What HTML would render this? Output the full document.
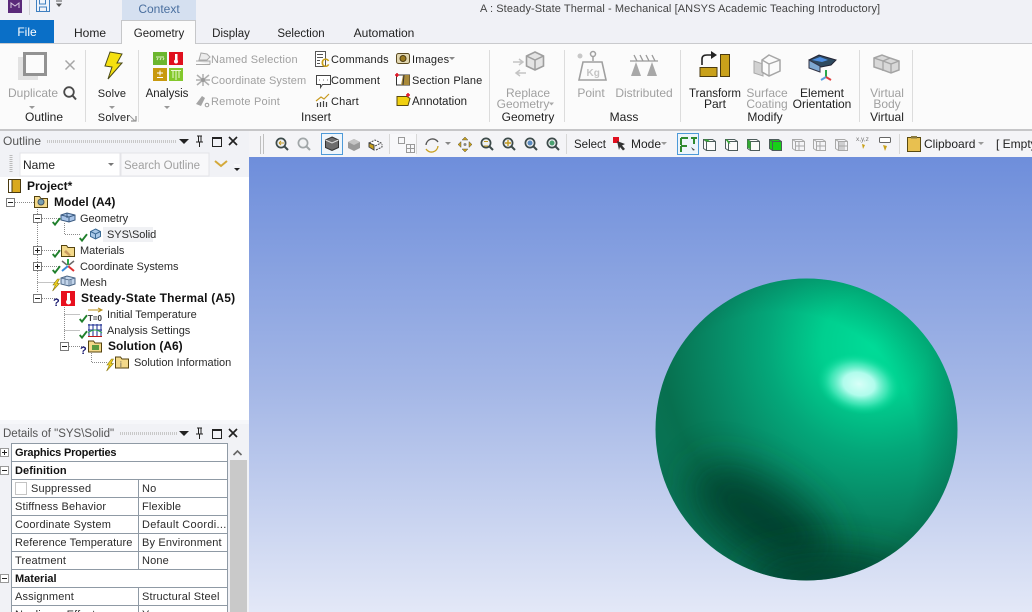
<!DOCTYPE html>
<html><head><meta charset="utf-8"><title>Mechanical</title>
<style>
html,body{margin:0;padding:0;overflow:hidden;width:1032px;height:612px}
#w{width:1032px;height:612px;overflow:hidden;position:relative;background:#f2f3f7;font-family:"Liberation Sans",sans-serif;font-size:12px;color:#222}
svg.a{position:absolute;left:0;top:0}
.t{position:absolute;line-height:14px;height:14px;white-space:nowrap;transform:translateY(-7px)}
.c{transform:translate(-50%,-7px);text-align:center}
.g{color:#a0a0a0}
.b{font-weight:bold;color:#111}
.s,.d,.db,.r,.n{transform:translateY(-6px)}
.c.r,.c.n{transform:translate(-50%,-6px)}
.s{font-size:11px;letter-spacing:-.03px;color:#2b2b2b}
.d{font-size:11px;letter-spacing:.15px;color:#2b2b2b}
.db{font-size:11px;font-weight:bold;color:#111}
.r{font-size:11.5px}
.n{font-size:11px;letter-spacing:.2px}
</style></head><body><div id="w">
<svg class="a" width="1032" height="612" viewBox="0 0 1032 612" xmlns="http://www.w3.org/2000/svg">
<defs>
<linearGradient id="bg" x1="0" y1="0" x2="0" y2="1"><stop offset="0" stop-color="#6e8edb"/><stop offset=".5" stop-color="#a3b6e6"/><stop offset="1" stop-color="#e3e8f7"/></linearGradient>
<radialGradient id="sph" gradientUnits="userSpaceOnUse" cx="875" cy="345" r="265">
<stop offset="0" stop-color="#00dc98"/><stop offset=".2" stop-color="#00cf8f"/><stop offset=".4" stop-color="#04a87a"/><stop offset=".6" stop-color="#078a66"/><stop offset=".8" stop-color="#07704f"/><stop offset="1" stop-color="#0a7558"/>
</radialGradient>
<radialGradient id="rim" gradientUnits="userSpaceOnUse" cx="780" cy="450" r="182"><stop offset=".76" stop-color="#04503a" stop-opacity="0"/><stop offset="1" stop-color="#04503a" stop-opacity=".3"/></radialGradient>
<radialGradient id="hl" cx=".5" cy=".5" r=".5"><stop offset="0" stop-color="#d8fff8"/><stop offset=".38" stop-color="#b0fcec"/><stop offset=".68" stop-color="#50ecc0" stop-opacity=".75"/><stop offset="1" stop-color="#00dc98" stop-opacity="0"/></radialGradient>
<filter id="bl" filterUnits="userSpaceOnUse" x="600" y="380" width="400" height="260"><feGaussianBlur stdDeviation="20"/></filter>
<clipPath id="cs"><circle cx="806.500" cy="429.500" r="151"/></clipPath>
<symbol id="ck" viewBox="0 0 9 9" overflow="visible"><path d="M.7 5 3 7.600 8 1.200" fill="none" stroke="#1f7f2b" stroke-width="1.900"/></symbol>
<symbol id="bt" viewBox="0 0 8 12" overflow="visible"><path d="M5.500 0 1 6h2.400L.6 12 7.400 4.600H5L7.400 0z" fill="#f0d020" stroke="#8a7a10" stroke-width=".6"/></symbol>
<symbol id="fo" viewBox="0 0 14 13" overflow="visible"><path d="M.5 12.500V1.500h5l1.500 2h6.500v9z" fill="#f3d98a" stroke="#55430f"/></symbol>
<symbol id="mg" viewBox="0 0 14 14" overflow="visible"><circle cx="6" cy="6" r="4.600" fill="#eef0f2" stroke="#3d4a4a" stroke-width="1.700"/><path d="M9.500 9.500 13 13" stroke="#3d4a4a" stroke-width="2"/></symbol>
</defs>

<rect width="1032" height="44" fill="#f0f1f6"/>
<rect y="43" width="1032" height="1" fill="#c9cacd"/>
<rect y="44" width="1032" height="85" fill="#fbfbfb"/>
<rect x="122" width="74" height="20" fill="#d5e0f0"/>
<rect x="0" y="20" width="54" height="23" fill="#0a6fc7"/>
<path d="M121.500 44V20.500h74V44" fill="#fbfbfb" stroke="#c6c7c9"/><rect x="122" y="42" width="73" height="3" fill="#fbfbfb"/>
<rect x="8" y="0" width="14" height="13" fill="#5a2a7a"/><path d="M11 8V3l4 3 4-3v5" fill="none" stroke="#d8c8e0" stroke-width="1"/>
<rect x="29" y="0" width="1" height="15" fill="#d0d1d5"/>
<path d="M36.500 0v11.500h13V0M39.500 11V7h7v4M39.500 0v4h6V0" fill="#eef3fb" stroke="#3f7fc0"/>
<path d="M56 1h6" stroke="#555" stroke-width="1"/><path d="M56 3.500h6L59 7z" fill="#555"/>

<g fill="#dcdcdc"><rect x="85" y="50" width="1" height="72"/><rect x="138" y="50" width="1" height="72"/><rect x="489" y="50" width="1" height="72"/><rect x="564" y="50" width="1" height="72"/><rect x="680" y="50" width="1" height="72"/><rect x="859" y="50" width="1" height="72"/><rect x="912" y="50" width="1" height="72"/></g>

<rect x="18" y="57" width="20" height="23" fill="#e2e2e2"/><rect x="24.500" y="53.500" width="21" height="21" fill="#fbfbfb" stroke="#929292" stroke-width="3"/>
<path d="M65.500 60.500l9 9m0-9l-9 9" stroke="#a6a6a6" stroke-width="1.500"/>
<circle cx="69" cy="92" r="4.800" fill="none" stroke="#4a4a4a" stroke-width="1.800"/><path d="M72.500 95.500 76 99.500" stroke="#4a4a4a" stroke-width="2"/>
<g fill="#999"><path d="M29 106h6l-3 3z"/><path d="M109 106h6l-3 3z"/><path d="M164 106h6l-3 3z"/></g>
<path d="M110 52l12 2-5 9h5l-14 16 4-12-7-1z" fill="#f5e010" stroke="#4a4a18" stroke-width="1"/>
<path d="M131 121h5v-5" fill="none" stroke="#777"/><path d="M130 116l5 5" stroke="#999"/>
<rect x="153" y="52" width="14" height="13" fill="#6cb62e"/><path d="M156 57h8M157 60l1-2M160 60l1-2M163 60l1-2" stroke="#dff0c8" fill="none"/>
<rect x="169" y="52" width="14" height="13" fill="#e0101e"/><rect x="175" y="54" width="2.500" height="7" fill="#fff"/><circle cx="176" cy="61.500" r="2" fill="#fff"/>
<rect x="153" y="68" width="14" height="13" fill="#c8990e"/><path d="M157 73h6M160 70.500v5M157 77.500h6" stroke="#fff" fill="none"/>
<rect x="169" y="68" width="14" height="13" fill="#83c82c"/><path d="M171 70.500h10M173 71v7M176 71v9M179 71v7" stroke="#e9f7d0" fill="none"/>
<path d="M196 64.500h14M196 61h14v3.500M199 60l2-7 6 1 3 3-3 3z" fill="#ececec" stroke="#a8a8a8"/>
<path d="M197 75l12 10m0-10L197 85M203 74v12M196 80h14" stroke="#b0b0b0" stroke-width="1.500"/><circle cx="203" cy="80" r="2" fill="#999"/>
<path d="M196 104l6-8 3 2-4 8z" fill="#a5a5a5"/><circle cx="207" cy="105" r="1.800" fill="none" stroke="#999"/>
<path d="M315.500 51.500h10v15h-10z" fill="#fff" stroke="#555"/><path d="M317 54.500h6M317 57.500h6M317 60.500h3M317 63.500h3" stroke="#555"/><text x="321" y="67" font-family="Liberation Sans" font-size="12" font-weight="bold" fill="#c9a018">C</text>
<path d="M316.500 75.500h14v9h-8l-2 3v-3h-4z" fill="#fff" stroke="#444"/><path d="M319 80h1M323 80h1M327 80h1" stroke="#777"/>
<path d="M316 101l5-4 3 2 5-5" fill="none" stroke="#c89a20" stroke-width="1.200"/><path d="M317.500 107v-4M320.500 107v-5M323.500 107v-6M326.500 107v-5" stroke="#444" stroke-width="1.200"/>
<rect x="396.500" y="53.500" width="13" height="10" rx="2" fill="#e2d7b0" stroke="#5a4a22"/><circle cx="403" cy="58.500" r="3" fill="#9a7a20" stroke="#4a3a12"/>
<rect x="396.500" y="75" width="13" height="10" fill="#fff" stroke="#333"/><path d="M403 75h6.500v10H401z" fill="#a98a3a"/><path d="M404 75 403 85" stroke="#333"/><path d="M395 75h4M397 73v4" stroke="#e01020" stroke-width="1.500"/>
<path d="M397 96.500h10l3 2-2 7h-11z" fill="#f0d010" stroke="#5a4a10"/><path d="M406 95h4M408 93v4" stroke="#e01020" stroke-width="1.500"/>
<g fill="#888"><path d="M449 57h6l-3 3z"/></g>
<path d="M535 52l8.500 4v10l-8.500 4-8.500-4V56z" fill="#e4e4e4" stroke="#9e9e9e" stroke-width="1.600"/><path d="M526.500 56l8.500 4 8.500-4M535 60v10" fill="none" stroke="#9e9e9e" stroke-width="1.500"/>
<path d="M513 62h9M519 59l4 3-4 3" fill="none" stroke="#c4c4c4" stroke-width="1.500"/><path d="M526 73h-9M520 70l-4 3 4 3" fill="none" stroke="#c4c4c4" stroke-width="1.500"/>
<path d="M549 102.500h5l-2.500 3z" fill="#aaa"/>
<circle cx="580" cy="56" r="2.500" fill="#c8c8c8"/><circle cx="593" cy="54" r="2.500" fill="none" stroke="#a0a0a0" stroke-width="1.500"/><path d="M593 57v4" stroke="#a0a0a0" stroke-width="1.500"/>
<path d="M583 62h19l4 18h-27z" fill="#fbfbfb" stroke="#a0a0a0" stroke-width="1.600"/><text x="586.500" y="76" font-family="Liberation Sans" font-size="10" font-weight="bold" fill="#c4c4c4">Kg</text>
<path d="M630 61h28M634 55l3 6M640 55l3 6M646 55l3 6M652 55l3 6" stroke="#999" stroke-width="1.300" fill="none"/>
<path d="M636 62l5 14h-10z" fill="#a8a8a8"/><path d="M652 62l5 14h-10z" fill="#a8a8a8"/>
<rect x="700" y="67.500" width="17" height="9" fill="#c9a11a" stroke="#4a3a10"/><rect x="720.500" y="54.500" width="9" height="22" fill="#c9a11a" stroke="#4a3a10"/>
<path d="M702 65v-6q0-4 5-4h7" fill="none" stroke="#222" stroke-width="1.600"/><path d="M711 51l6 4-6 4z" fill="#222"/>
<path d="M754 61l9 3v12l-9-3z" fill="#d2d2d2" stroke="#a8a8a8"/><path d="M769 55l11 5v11l-11 5-7-4V60z" fill="#fbfbfb" stroke="#a6a6a6" stroke-width="1.500"/><path d="M762 60l7 4 11-4M769 64v12" fill="none" stroke="#a6a6a6" stroke-width="1.300"/>
<path d="M809 60l10-5 17 5-5 5-10 2-12-3z" fill="#2e4a60" stroke="#223"/><path d="M812 60l8-3 8 3-6 2z" fill="#4d8de0"/><path d="M809 60l11 6v6l-11-4z" fill="#7fa8d0" stroke="#334"/>
<path d="M826 70v7" stroke="#2aa84a" stroke-width="2"/><path d="M826 77l-5 3" stroke="#5aa0e0" stroke-width="2"/><path d="M826 77l5 3" stroke="#e04040" stroke-width="2"/>
<path d="M874 58l8-3 8 3 9 3v9l-8 3-8-3-9-3z" fill="#d8d8d8" stroke="#a4a4a4" stroke-width="1.500"/><path d="M874 58l9 3v10M883 61l7-3M883 61l8 3 8-3M891 64v9" fill="none" stroke="#a4a4a4" stroke-width="1.300"/>

<rect y="129" width="1032" height="28" fill="#f4f4f7"/><rect y="129" width="1032" height="2" fill="#c6c6c8"/>
<rect x="249" y="157" width="783" height="455" fill="url(#bg)"/>
<g fill="#bfbfbf"><rect x="260" y="136" width="1" height="18"/><rect x="263" y="134" width="1" height="20"/></g>
<use href="#mg" x="275" y="137" width="14" height="14"/><path d="M279 143h5M279 143l2-2M279 143l2 2" stroke="#c49a20" fill="none"/>
<g opacity=".45"><use href="#mg" x="297" y="137" width="14" height="14"/></g>
<rect x="321.500" y="133.500" width="21" height="21" fill="#eef5fb" stroke="#4d9ad8"/>
<path d="M332 137l6.500 3v7.500l-6.500 3-6.500-3V140z" fill="#6d6d6d" stroke="#333"/><path d="M325.500 140l6.500 3 6.500-3" fill="none" stroke="#ddd"/>
<path d="M354 139l6 3v6l-6 3-6-3v-6z" fill="#999"/><path d="M348 142l6 3 6-3-6-3z" fill="#c4c4c4"/>
<path d="M369 143l6-3 6 3-6 3z" fill="#fff" stroke="#444" stroke-dasharray="2 1"/><path d="M369 147l5 3v-5l-5-2z" fill="#c9a11a" stroke="#444"/><path d="M376 150l6-3v-3" fill="none" stroke="#444" stroke-dasharray="2 1"/>
<rect x="389" y="134" width="1" height="20" fill="#d8d8d8"/><rect x="390" y="134" width="26" height="22" fill="#f8f8fa"/><rect x="416" y="134" width="1" height="20" fill="#d8d8d8"/>
<rect x="398.500" y="137.500" width="6" height="6" fill="none" stroke="#9a9a9a"/><path d="M406.500 144.500h8v8h-8zM410.500 144.500v8M406.500 148.500h8" fill="none" stroke="#9a9a9a"/>
<path d="M426 145a6.500 6.500 0 0 1 12-3" fill="none" stroke="#555" stroke-width="1.300"/><path d="M438 146a6.500 6.500 0 0 1-12 3" fill="none" stroke="#c8a020" stroke-width="1.300"/>
<path d="M445 142h6l-3 3z" fill="#888"/>
<path d="M465 137l3 3h-6zM465 152l3-3h-6zM458 144.500l3-3v6zM472 144.500l-3-3v6z" fill="#c9a11a" stroke="#555" stroke-width=".5"/><circle cx="465" cy="144.500" r="1.500" fill="#888"/>
<use href="#mg" x="480" y="137" width="14" height="14"/><path d="M484 141.500h4M484 146h4" stroke="#c49a20"/>
<use href="#mg" x="502" y="137" width="14" height="14"/><path d="M505 143h6M508 140v6" stroke="#c49a20" stroke-width="1.400"/>
<use href="#mg" x="524" y="137" width="14" height="14"/><circle cx="530" cy="143" r="2.500" fill="#5a8ac0"/>
<use href="#mg" x="546" y="137" width="14" height="14"/><circle cx="552" cy="143" r="2.500" fill="#4aa070"/>
<rect x="566" y="134" width="1" height="20" fill="#d8d8d8"/>
<path d="M613 137h6v6h-6z" fill="#e01020"/><path d="M617 141l8 3-3 1.500 3 3.500-2 1.500-3-3.500-1 3z" fill="#333"/>
<path d="M661 142h6l-3 3z" fill="#999"/>
<rect x="677.500" y="133.500" width="21" height="21" fill="#eef5fb" stroke="#4d9ad8"/>
<path d="M681 138h7M681 138v7M691 138h6M694 138v6M681 146h6M681 146v6" stroke="#2f8a30" stroke-width="2" fill="none"/><path d="M691 147l4 3-2 .5z" fill="#444"/>
<g fill="none" stroke="#4d5b5b">
<path d="M703.500 139.500h9l3 2v9h-9l-3-2z" fill="#fbfbfb"/><path d="M703.500 139.500l3 2h9M706.500 141.500v9"/>
<path d="M725.500 139.500h9l3 2v9h-9l-3-2z" fill="#fbfbfb"/><path d="M725.500 139.500l3 2h9M728.500 141.500v9"/>
<path d="M747.500 139.500h9l3 2v9h-9l-3-2z" fill="#fbfbfb"/><path d="M747.500 139.500l3 2h9M750.500 141.500v9"/>
<path d="M769.500 139.500h9l3 2v9h-9l-3-2z" fill="#18d018"/><path d="M769.500 139.500l3 2h9M772.500 141.500v9"/>
</g>
<path d="M703.500 139.500h4l3 2h-4zM725.500 139.500l2 0 3 4-2 0z" fill="#3a3"/><path d="M747.500 139.500v8l3 2v-8z" fill="#3a3"/>
<g fill="none" stroke="#a8a8a8">
<path d="M792.500 139.500h9l3 2v9h-9l-3-2zM792.500 139.500l3 2h9M795.500 141.500v9M799 141v10M795 146h10"/>
<path d="M813.500 139.500h9l3 2v9h-9l-3-2zM813.500 139.500l3 2h9M816.500 141.500v9M820 141v10M816 146h10"/>
<path d="M835.500 139.500h9l3 2v9h-9l-3-2zM835.500 139.500l3 2h9M838.500 141.500v9M842 141v10M838 146h10M840 141v10M844 141v10"/>
</g>
<text x="856" y="141" font-family="Liberation Sans" font-size="6.500" fill="#777">x,y,z</text><path d="M862 144l3 1-2 4z" fill="#c9a11a"/>
<rect x="879.500" y="137.500" width="11" height="5" rx="1" fill="#fff" stroke="#666"/><path d="M883 145l4 1-2 5z" fill="#c9a11a"/>
<rect x="899" y="134" width="1" height="20" fill="#d8d8d8"/>
<rect x="907.500" y="137.500" width="13" height="14" fill="#e8c050" stroke="#5a4a10"/><rect x="911" y="136" width="6" height="2.500" fill="#8a7a40"/>
<path d="M978 142h6l-3 3z" fill="#999"/>

<g clip-path="url(#cs)">
<circle cx="806.500" cy="429.500" r="152" fill="url(#sph)"/>
<ellipse cx="762" cy="518" rx="80" ry="36" fill="#023a2a" opacity=".85" filter="url(#bl)" transform="rotate(33 762 518)"/>
<ellipse cx="830" cy="580" rx="85" ry="24" fill="#023a2a" opacity=".85" filter="url(#bl)"/>
<circle cx="806.500" cy="429.500" r="152" fill="url(#rim)"/>
</g>
<ellipse cx="859" cy="384" rx="42" ry="30" fill="url(#hl)" transform="rotate(12 859 384)"/>

<rect x="0" y="129" width="249" height="483" fill="#f1f2f6"/>
<rect x="0" y="129" width="1032" height="2" fill="#c6c6c8"/>
<path d="M47 141.500h130" stroke="#c8c8c8" stroke-width="3" stroke-dasharray="1 1"/>
<path d="M179 139h10l-5 5z" fill="#222"/>
<path d="M197 136h5M198.500 136v6M201 136v6M196 142h7M199.500 142v5" stroke="#222" fill="none"/>
<rect x="212.500" y="137.500" width="9" height="9" fill="none" stroke="#222"/><rect x="212" y="137" width="10" height="2" fill="#222"/>
<path d="M229 137l8 8m0-8l-8 8" stroke="#222" stroke-width="1.700"/>
<path d="M11 155v18" stroke="#bbb" stroke-width="3" stroke-dasharray="1 1"/>
<rect x="20" y="153" width="100" height="23" fill="#fff" stroke="#e4e4e8"/><rect x="121" y="153" width="88" height="23" fill="#f8f8fa" stroke="#e4e4e8"/>
<path d="M108 163h6l-3 3z" fill="#777"/>
<path d="M215 161l6 5 6-5" fill="none" stroke="#d4a93a" stroke-width="2"/>
<path d="M234 168h6l-3 3z" fill="#222"/><path d="M234 165h6" stroke="#fff"/>
<rect x="0" y="177" width="249" height="243" fill="#fff"/>
<rect x="103" y="227" width="50" height="15" fill="#f0f1f4"/>

<g stroke="#8a8a8a" stroke-dasharray="1 1" fill="none">
<path d="M15 202.500h19M37.500 207v86M42 218.500h17M64.500 223v11.500h16M42 250.500h17M42 266.500h17M37.500 282.500h20M42 298.500h15M64.500 303v38M64.500 314.500h16M64.500 330.500h16M69 346.500h15M91.500 351v11.500h16"/>
</g>
<g fill="#fff" stroke="#7a7a7a">
<rect x="6.500" y="198.500" width="8" height="8"/><rect x="33.500" y="214.500" width="8" height="8"/><rect x="33.500" y="246.500" width="8" height="8"/><rect x="33.500" y="262.500" width="8" height="8"/><rect x="33.500" y="294.500" width="8" height="8"/><rect x="60.500" y="342.500" width="8" height="8"/>
</g>
<path d="M8 202.500h5M35 218.500h5M35 250.500h5M37.500 248v5M35 266.500h5M37.500 264v5M35 298.500h5M62 346.500h5" stroke="#222"/>
<rect x="8.500" y="179.500" width="12" height="13" fill="#d9a91f" stroke="#4a3a10"/><rect x="8.500" y="179.500" width="3.500" height="13" fill="#fff" stroke="#4a3a10"/>
<use href="#fo" x="34" y="195" width="14" height="13"/><circle cx="41" cy="202" r="3" fill="#7aa0b0" stroke="#456"/>
<path d="M61 215l6-2 8 2v5l-6 2-8-2z" fill="#a8c4e8" stroke="#3a5a80"/><path d="M61 215l8 2 6-2M67 213v5M69 217v5" fill="none" stroke="#3a5a80"/>
<use href="#ck" x="52" y="217" width="9" height="9"/>
<path d="M95.500 229l5 2.500v5l-5 2.500-5-2.500v-5z" fill="#a8c8e8" stroke="#3a6a95"/><path d="M90.500 231.500l5 2.500 5-2.500M95.500 234v5" fill="none" stroke="#3a6a95"/>
<use href="#ck" x="79" y="233" width="9" height="9"/>
<use href="#fo" x="61" y="244" width="14" height="13"/><path d="M66 250l5 5-2 1-5-4z" fill="#c89a60"/>
<use href="#ck" x="52" y="249" width="9" height="9"/>
<path d="M68 259v6" stroke="#2aa84a" stroke-width="2"/><path d="M68 266l6 5" stroke="#e03030" stroke-width="2"/><path d="M68 266l-6 5" stroke="#3a8ad8" stroke-width="2"/><path d="M62 261l5 4M74 261l-5 4" stroke="#6a6a6a" stroke-width="1.500"/>
<use href="#ck" x="52" y="265" width="9" height="9"/>
<path d="M61 278l6-2 8 2v6l-6 2-8-2z" fill="#c2d4ea" stroke="#4a6585"/><path d="M61 278l8 2 6-2M69 280v6M65 277v7M71 279v6" fill="none" stroke="#4a6585" stroke-width=".7"/>
<use href="#bt" x="52" y="279" width="8" height="12"/>
<rect x="61" y="291" width="14" height="15" fill="#e8101e"/><rect x="67" y="293" width="3" height="8" fill="#fff"/><circle cx="68.500" cy="302" r="2.500" fill="#fff"/>
<text x="53" y="306" font-family="Liberation Sans" font-size="11" font-weight="bold" fill="#1a1a70">?</text>
<path d="M88 310h13M98 308l4 2-4 2" fill="none" stroke="#b8901a"/><text x="88" y="321" font-family="Liberation Sans" font-size="8" font-weight="bold" fill="#333">T=0</text>
<use href="#ck" x="79" y="314" width="9" height="9"/>
<path d="M89 324v13M93 324v13M97 324v13M101 324v13M88 325h14M88 330h14" stroke="#1a2a90" fill="none"/><path d="M88 333q7-6 14 0" stroke="#2aa84a" fill="none"/><path d="M88 336.500h14" stroke="#c01818"/>
<use href="#ck" x="79" y="330" width="9" height="9"/>
<use href="#fo" x="88" y="339" width="14" height="14"/><rect x="92" y="345" width="7" height="5" fill="#5a9a40"/>
<text x="80" y="354" font-family="Liberation Sans" font-size="11" font-weight="bold" fill="#1a1a70">?</text>
<use href="#fo" x="115" y="355" width="14" height="14"/><text x="120" y="367" font-family="Liberation Sans" font-size="8" fill="#555">i</text>
<use href="#bt" x="106" y="359" width="8" height="12"/>

<rect x="0" y="420" width="249" height="192" fill="#f1f2f6"/><rect x="0" y="420" width="249" height="4" fill="#f6f7fa"/>
<path d="M120 433.500h58" stroke="#c8c8c8" stroke-width="3" stroke-dasharray="1 1"/>
<path d="M179 431h10l-5 5z" fill="#222"/>
<path d="M197 428h5M198.500 428v6M201 428v6M196 434h7M199.500 434v5" stroke="#222" fill="none"/>
<rect x="212.500" y="429.500" width="9" height="9" fill="none" stroke="#222"/><rect x="212" y="429" width="10" height="2" fill="#222"/>
<path d="M229 429l8 8m0-8l-8 8" stroke="#222" stroke-width="1.700"/>
<rect x="11" y="443" width="217" height="169" fill="#fff"/>
<g fill="none" stroke="#8f9aa5">
<path d="M11.500 443.500h216.500M11.500 461.500h216.500M11.500 479.500h216.500M11.500 497.500h216.500M11.500 515.500h216.500M11.500 533.500h216.500M11.500 551.500h216.500M11.500 569.500h216.500M11.500 587.500h216.500M11.500 605.500h216.500"/>
<path d="M11.500 443v169M227.500 443v169M138.500 479v90M138.500 587v25"/>
</g>
<g fill="#fff" stroke="#999"><rect x="0.500" y="448.500" width="8" height="8"/><rect x="0.500" y="466.500" width="8" height="8"/><rect x="0.500" y="574.500" width="8" height="8"/></g>
<path d="M2 452.500h5M4.500 450v5M2 470.500h5M2 578.500h5" stroke="#222"/>
<rect x="15.500" y="482.500" width="11" height="12" fill="#fff" stroke="#c4c4c4"/>
<rect x="230" y="443" width="17" height="17" fill="#f1f2f6"/><rect x="230" y="460" width="17" height="152" fill="#c9c9c9"/>
<path d="M233.500 455l4-4 4 4" fill="none" stroke="#666" stroke-width="1.600"/>
</svg>

<span class="t" style="left:480px;top:9px;color:#444;font-size:11px;letter-spacing:.09px">A : Steady-State Thermal - Mechanical [ANSYS Academic Teaching Introductory]</span>
<span class="t c" style="left:159px;top:9px;color:#4a6f9f">Context</span>
<span class="t c" style="left:27px;top:32px;color:#fff">File</span>
<span class="t c" style="left:90px;top:33px">Home</span>
<span class="t c r" style="left:159px;top:33px">Geometry</span>
<span class="t c r" style="left:231px;top:33px">Display</span>
<span class="t c r" style="left:301px;top:33px">Selection</span>
<span class="t c" style="left:384px;top:33px">Automation</span>

<span class="t c g" style="left:33px;top:93px">Duplicate</span>
<span class="t c" style="left:44px;top:117px">Outline</span>
<span class="t c n" style="left:112px;top:93px">Solve</span>
<span class="t c n" style="left:114px;top:117px">Solver</span>
<span class="t c r" style="left:167px;top:93px">Analysis</span>
<span class="t g n" style="left:211px;top:59px">Named Selection</span>
<span class="t g n" style="left:211px;top:80px;letter-spacing:.1px">Coordinate System</span>
<span class="t g n" style="left:211px;top:101px">Remote Point</span>
<span class="t c" style="left:316px;top:117px">Insert</span>
<span class="t n" style="left:331px;top:59px">Commands</span>
<span class="t n" style="left:331px;top:80px">Comment</span>
<span class="t n" style="left:331px;top:101px">Chart</span>
<span class="t n" style="left:412px;top:59px">Images</span>
<span class="t n" style="left:412px;top:80px">Section Plane</span>
<span class="t r" style="left:412px;top:101px">Annotation</span>
<span class="t c g" style="left:528px;top:93px">Replace</span>
<span class="t c g" style="left:523px;top:104px">Geometry</span>
<span class="t c" style="left:528px;top:117px">Geometry</span>
<span class="t c g" style="left:591px;top:93px">Point</span>
<span class="t c g" style="left:644px;top:93px">Distributed</span>
<span class="t c" style="left:624px;top:117px">Mass</span>
<span class="t c r" style="left:715px;top:93px">Transform</span>
<span class="t c" style="left:715px;top:104px">Part</span>
<span class="t c g" style="left:767px;top:93px">Surface</span>
<span class="t c g" style="left:767px;top:104px">Coating</span>
<span class="t c" style="left:765px;top:117px">Modify</span>
<span class="t c" style="left:822px;top:93px">Element</span>
<span class="t c" style="left:822px;top:104px">Orientation</span>
<span class="t c g" style="left:887px;top:93px">Virtual</span>
<span class="t c g" style="left:887px;top:104px">Body</span>
<span class="t c" style="left:887px;top:117px">Virtual</span>

<span class="t r" style="left:574px;top:144px">Select</span>
<span class="t" style="left:631px;top:144px">Mode</span>
<span class="t" style="left:924px;top:144px">Clipboard</span>
<span class="t" style="left:996px;top:144px">[ Empty</span>

<span class="t" style="left:3px;top:141px;color:#555">Outline</span>
<span class="t" style="left:23px;top:165px">Name</span>
<span class="t g r" style="left:124px;top:165px">Search Outline</span>

<span class="t b" style="left:27px;top:186px">Project*</span>
<span class="t b" style="left:54px;top:202px">Model (A4)</span>
<span class="t s" style="left:80px;top:218px">Geometry</span>
<span class="t s" style="left:107px;top:234px">SYS\Solid</span>
<span class="t s" style="left:80px;top:250px">Materials</span>
<span class="t s" style="left:80px;top:266px">Coordinate Systems</span>
<span class="t s" style="left:80px;top:282px">Mesh</span>
<span class="t b" style="left:81px;top:298px;letter-spacing:.2px">Steady-State Thermal (A5)</span>
<span class="t s" style="left:107px;top:314px">Initial Temperature</span>
<span class="t s" style="left:107px;top:330px">Analysis Settings</span>
<span class="t b" style="left:108px;top:346px">Solution (A6)</span>
<span class="t s" style="left:134px;top:362px">Solution Information</span>

<span class="t r" style="left:3px;top:433px;color:#555">Details of "SYS\Solid"</span>
<span class="t db" style="left:15px;top:452px;letter-spacing:-.2px">Graphics Properties</span>
<span class="t db" style="left:15px;top:470px;letter-spacing:.1px">Definition</span>
<span class="t d" style="left:31px;top:488px">Suppressed</span>
<span class="t d" style="left:142px;top:488px">No</span>
<span class="t d" style="left:15px;top:506px">Stiffness Behavior</span>
<span class="t d" style="left:142px;top:506px">Flexible</span>
<span class="t d" style="left:15px;top:524px">Coordinate System</span>
<span class="t d" style="left:142px;top:524px;letter-spacing:.3px">Default Coordi...</span>
<span class="t d" style="left:15px;top:542px;letter-spacing:.1px">Reference Temperature</span>
<span class="t d" style="left:142px;top:542px">By Environment</span>
<span class="t d" style="left:15px;top:560px">Treatment</span>
<span class="t d" style="left:142px;top:560px">None</span>
<span class="t db" style="left:15px;top:578px">Material</span>
<span class="t d" style="left:15px;top:596px">Assignment</span>
<span class="t d" style="left:142px;top:596px">Structural Steel</span>
<span class="t d" style="left:15px;top:614px">Nonlinear Effects</span>
<span class="t d" style="left:142px;top:614px">Yes</span>
</div></body></html>
